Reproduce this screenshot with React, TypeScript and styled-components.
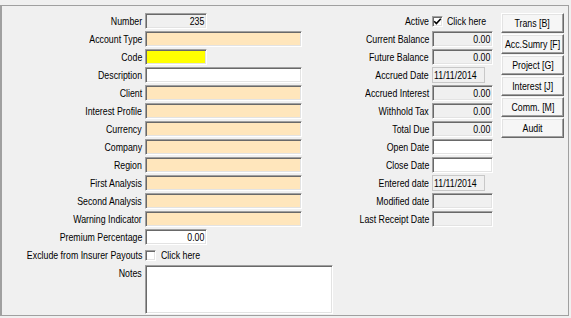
import React from 'react';
import styled, { createGlobalStyle } from 'styled-components';

const GlobalStyle = createGlobalStyle`
  html, body {
    margin: 0;
    padding: 0;
    background: #f0f0f0;
  }
  body {
    font-family: 'Liberation Sans', Arial, sans-serif;
    font-size: 11px;
    color: #000;
  }
`;

const Page = styled.div`
  width: 571px;
  height: 318px;
  padding-top: 5px;
  box-sizing: border-box;
`;

const Frame = styled.div`
  width: 569px;
  height: 311px;
  box-sizing: border-box;
  border: 1px solid #a0a0a0;
  border-left: 2px solid #a0a0a0;
  padding-top: 7px;
  display: flex;
  align-items: flex-start;
`;

// the form's font is a narrow sans; squeeze the glyphs to its width
const Txt = styled.span<{ $origin?: 'left' | 'right' | 'center' }>`
  display: inline-block;
  white-space: nowrap;
  transform: scaleX(0.8);
  transform-origin: ${(p) => p.$origin ?? 'right'} center;
`;

const FieldGrid = styled.div<{ $labelWidth: number; $fieldWidth: number }>`
  display: grid;
  grid-template-columns: ${(p) => p.$labelWidth}px ${(p) => p.$fieldWidth}px;
  column-gap: 3px;
  row-gap: 2px;
  grid-auto-rows: 16px;
`;

const Label = styled.div<{ $top?: boolean }>`
  display: flex;
  justify-content: flex-end;
  align-items: ${(p) => (p.$top ? 'flex-start' : 'center')};
  padding-top: ${(p) => (p.$top ? '2px' : '0')};
  white-space: nowrap;
  line-height: 12px;
`;

type Tone = 'peach' | 'yellow' | 'white' | 'gray';

const toneColor: Record<Tone, string> = {
  peach: '#ffe6bc',
  yellow: '#ffff00',
  white: '#ffffff',
  gray: '#f0f0f0',
};

const Field = styled.div<{ $tone: Tone; $width?: number; $align?: 'left' | 'right' }>`
  box-sizing: border-box;
  height: 16px;
  width: ${(p) => (p.$width ? `${p.$width}px` : '100%')};
  background: ${(p) => toneColor[p.$tone]};
  border: 1px solid;
  border-color: #a0a0a0 #ffffff #ffffff #a0a0a0;
  box-shadow: inset 1px 1px 0 #696969, inset -1px -1px 0 #e3e3e3;
  padding: 0 2px;
  display: flex;
  align-items: center;
  justify-content: ${(p) => (p.$align === 'right' ? 'flex-end' : 'flex-start')};
  white-space: nowrap;
`;

const DateBox = styled.div`
  box-sizing: border-box;
  height: 16px;
  width: 53px;
  background: #f0f0f0;
  border: 1px solid #c8c8c8;
  padding: 0 1px;
  display: flex;
  align-items: center;
`;

const Notes = styled(Field)`
  height: 49px;
  grid-row: span 3;
`;

const CheckRow = styled.div<{ $gap: number }>`
  display: flex;
  align-items: center;
  gap: ${(p) => p.$gap}px;
  white-space: nowrap;
`;

const CheckBox = styled.span`
  box-sizing: border-box;
  flex: none;
  width: 11px;
  height: 11px;
  background: #fff;
  border: 1px solid;
  border-color: #a0a0a0 #ffffff #ffffff #a0a0a0;
  box-shadow: inset 1px 1px 0 #696969, inset -1px -1px 0 #e3e3e3;
  display: flex;
  align-items: center;
  justify-content: center;
`;

const ButtonStack = styled.div`
  display: flex;
  flex-direction: column;
  gap: 1px;
  margin-left: 8px;
  width: 63px;
`;

const ActionButton = styled.button`
  box-sizing: border-box;
  height: 20px;
  width: 63px;
  padding: 0;
  font: inherit;
  color: #000;
  background: #f6f6f6;
  border: 1px solid;
  border-color: #ffffff #696969 #696969 #ffffff;
  box-shadow: inset -1px -1px 0 #a0a0a0, inset 1px 1px 0 #e3e3e3;
  white-space: nowrap;
  display: flex;
  align-items: center;
  justify-content: center;
`;

const Check = ({ checked }: { checked?: boolean }) => (
  <CheckBox>
    {checked && (
      <svg width="9" height="9" viewBox="0 0 9 9">
        <path d="M1.2 4.3 L3.4 6.6 L7.8 1.8" fill="none" stroke="#000" strokeWidth="1.6" />
      </svg>
    )}
  </CheckBox>
);

const leftRows: { label: string; tone: Tone; width?: number; value?: string }[] = [
  { label: 'Number', tone: 'gray', width: 62, value: '235' },
  { label: 'Account Type', tone: 'peach' },
  { label: 'Code', tone: 'yellow', width: 62 },
  { label: 'Description', tone: 'white' },
  { label: 'Client', tone: 'peach' },
  { label: 'Interest Profile', tone: 'peach' },
  { label: 'Currency', tone: 'peach' },
  { label: 'Company', tone: 'peach' },
  { label: 'Region', tone: 'peach' },
  { label: 'First Analysis', tone: 'peach' },
  { label: 'Second Analysis', tone: 'peach' },
  { label: 'Warning Indicator', tone: 'peach' },
  { label: 'Premium Percentage', tone: 'white', width: 62, value: '0.00' },
];

type MidRow =
  | { label: string; kind: 'amount'; value: string }
  | { label: string; kind: 'date'; value: string }
  | { label: string; kind: 'empty'; tone: Tone };

const midRows: MidRow[] = [
  { label: 'Current Balance', kind: 'amount', value: '0.00' },
  { label: 'Future Balance', kind: 'amount', value: '0.00' },
  { label: 'Accrued Date', kind: 'date', value: '11/11/2014' },
  { label: 'Accrued Interest', kind: 'amount', value: '0.00' },
  { label: 'Withhold Tax', kind: 'amount', value: '0.00' },
  { label: 'Total Due', kind: 'amount', value: '0.00' },
  { label: 'Open Date', kind: 'empty', tone: 'white' },
  { label: 'Close Date', kind: 'empty', tone: 'white' },
  { label: 'Entered date', kind: 'date', value: '11/11/2014' },
  { label: 'Modified date', kind: 'empty', tone: 'gray' },
  { label: 'Last Receipt Date', kind: 'empty', tone: 'gray' },
];

const buttons = ['Trans [B]', 'Acc.Sumry [F]', 'Project [G]', 'Interest [J]', 'Comm. [M]', 'Audit'];

export default function App() {
  return (
    <>
      <GlobalStyle />
      <Page>
        <Frame>
          <FieldGrid $labelWidth={140} $fieldWidth={188}>
            {leftRows.map((row) => (
              <React.Fragment key={row.label}>
                <Label>
                  <Txt>{row.label}</Txt>
                </Label>
                <Field $tone={row.tone} $width={row.width ?? 157} $align="right">
                  {row.value && <Txt>{row.value}</Txt>}
                </Field>
              </React.Fragment>
            ))}
            <Label>
              <Txt>Exclude from Insurer Payouts</Txt>
            </Label>
            <CheckRow $gap={5}>
              <Check />
              <Txt $origin="left">Click here</Txt>
            </CheckRow>
            <Label $top>
              <Txt>Notes</Txt>
            </Label>
            <Notes $tone="white" />
          </FieldGrid>

          <FieldGrid $labelWidth={96} $fieldWidth={61}>
            <Label>
              <Txt>Active</Txt>
            </Label>
            <CheckRow $gap={4}>
              <Check checked />
              <Txt $origin="left">Click here</Txt>
            </CheckRow>
            {midRows.map((row) => (
              <React.Fragment key={row.label}>
                <Label>
                  <Txt>{row.label}</Txt>
                </Label>
                {row.kind === 'amount' && (
                  <Field $tone="gray" $align="right">
                    <Txt>{row.value}</Txt>
                  </Field>
                )}
                {row.kind === 'date' && (
                  <DateBox>
                    <Txt $origin="left">{row.value}</Txt>
                  </DateBox>
                )}
                {row.kind === 'empty' && <Field $tone={row.tone} />}
              </React.Fragment>
            ))}
          </FieldGrid>

          <ButtonStack>
            {buttons.map((b) => (
              <ActionButton key={b}>
                <Txt $origin="center">{b}</Txt>
              </ActionButton>
            ))}
          </ButtonStack>
        </Frame>
      </Page>
    </>
  );
}
